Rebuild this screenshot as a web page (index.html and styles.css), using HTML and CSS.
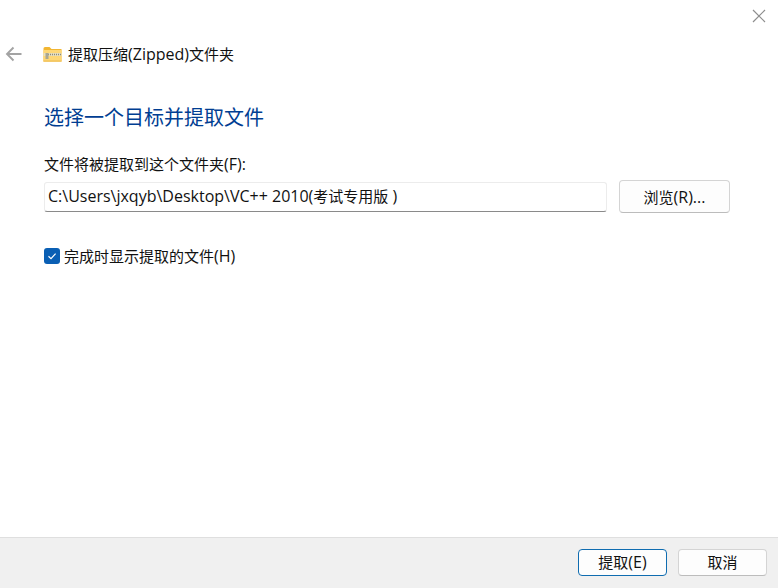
FILE: index.html
```html
<!DOCTYPE html>
<html lang="zh-CN">
<head>
<meta charset="utf-8">
<title>提取压缩(Zipped)文件夹</title>
<link rel="stylesheet" href="styles.css">
</head>
<body>
<div class="window">
  <div class="closebar">
    <svg class="close" width="16" height="16" viewBox="0 0 16 16"><path d="M2 2 L14 14 M14 2 L2 14" stroke="#8e8e8e" stroke-width="1.2" fill="none"/></svg>
  </div>
  <div class="titlebar">
    <svg class="back" width="18" height="16" viewBox="0 0 18 16"><path d="M16.5 8 H2 M8.5 1.5 L2 8 L8.5 14.5" stroke="#a3a3a3" stroke-width="1.9" fill="none"/></svg>
    <svg class="folder" width="19" height="16" viewBox="0 0 19 16">
      <path d="M0.5 2.5 Q0.5 1 2 1 H6.5 L8.5 3 H18.5 V15.5 H0.5 Z" fill="#f2b632"/>
      <rect x="0.5" y="4" width="18" height="11.5" fill="#fdd776"/>
      <rect x="0.5" y="14.5" width="18" height="1" fill="#edbb52"/>
      <rect x="0.5" y="7" width="18" height="3" fill="#e6dfc0"/>
      <path d="M5 8.5 H18" stroke="#8d8a78" stroke-width="1.4" stroke-dasharray="1 1" fill="none"/>
      <rect x="2.5" y="7" width="3" height="6" fill="#a9a793"/>
    </svg>
    <span class="title">提取压缩<span class="lat">(Zipped)</span>文件夹</span>
  </div>
  <main class="content">
    <h1 class="heading">选择一个目标并提取文件</h1>
    <label class="fieldlabel">文件将被提取到这个文件夹<span class="lat">(F):</span></label>
    <div class="pathrow">
      <div class="pathinput"><span class="lat">C:\Users\jxqyb\Desktop\VC++ 2010(</span>考试专用版<span class="lat"> )</span></div>
      <button class="btn browse">浏览<span class="lat">(R)...</span></button>
    </div>
    <div class="checkrow">
      <span class="checkbox"><svg width="12" height="12" viewBox="0 0 12 12"><path d="M2.5 6.2 L5 8.6 L9.6 3.6" stroke="#fff" stroke-width="1.2" fill="none"/></svg></span>
      <span class="checklabel">完成时显示提取的文件<span class="lat">(H)</span></span>
    </div>
  </main>
  <footer class="footer">
    <button class="btn action primary">提取<span class="lat">(E)</span></button>
    <button class="btn action">取消</button>
  </footer>
</div>
</body>
</html>
```
FILE: styles.css
```css
* { box-sizing: border-box; }
html, body { margin: 0; padding: 0; height: 100%; }
body {
  font-family: "Open Sans", "Noto Sans CJK SC", sans-serif;
  font-size: 15px;
  color: #111;
  background: #fff;
}
.lat { font-size: 16px; }
.window { width: 778px; height: 588px; display: flex; flex-direction: column; overflow: hidden; }
.closebar { height: 39px; display: flex; justify-content: flex-end; padding: 8px 11px 0 0; flex: none; }
.titlebar { height: 30px; display: flex; align-items: center; padding-left: 5px; flex: none; }
.back { margin-right: 20px; }
.folder { margin-right: 6px; }
.title { font-size: 15px; line-height: 30px; }
.content { flex: 1; padding: 33px 48px 0 44px; }
.heading { margin: 0; font-size: 20px; font-weight: 400; color: #003e92; line-height: 32px; height: 32px; }
.fieldlabel { display: block; margin-top: 19px; line-height: 22px; font-size: 15px; height: 22px; }
.pathrow { display: flex; align-items: center; justify-content: space-between; margin-top: 5px; }
.pathinput {
  width: 563px; height: 30px; line-height: 27px; padding-left: 3px;
  background: #fff; border: 1px solid #ececec; border-bottom: 1px solid #8a8a8a; border-radius: 3px;
  font-size: 15px; white-space: nowrap;
}
.btn {
  font-family: inherit; font-size: 15px; color: #111; background: #fdfdfd;
  border: 1px solid #d4d4d4; border-bottom-color: #bcbcbc; border-radius: 4px; padding: 0;
}
.browse { width: 111px; height: 33px; }
.checkrow { display: flex; align-items: center; margin-top: 32px; height: 22px; }
.checkbox { width: 16px; height: 16px; border-radius: 3px; background: #0a5fb4; display: flex; align-items: center; justify-content: center; margin-right: 4px; }
.checklabel { font-size: 15px; }
.footer {
  height: 51px; flex: none; background: #f0f0f0; border-top: 1px solid #dfdfdf;
  display: flex; justify-content: flex-end; align-items: flex-start; gap: 11px; padding: 11px 11px 0 0;
}
.action { width: 89px; height: 27px; line-height: 23px; }
.primary { border: 1.5px solid #0f6cb0; }
```
